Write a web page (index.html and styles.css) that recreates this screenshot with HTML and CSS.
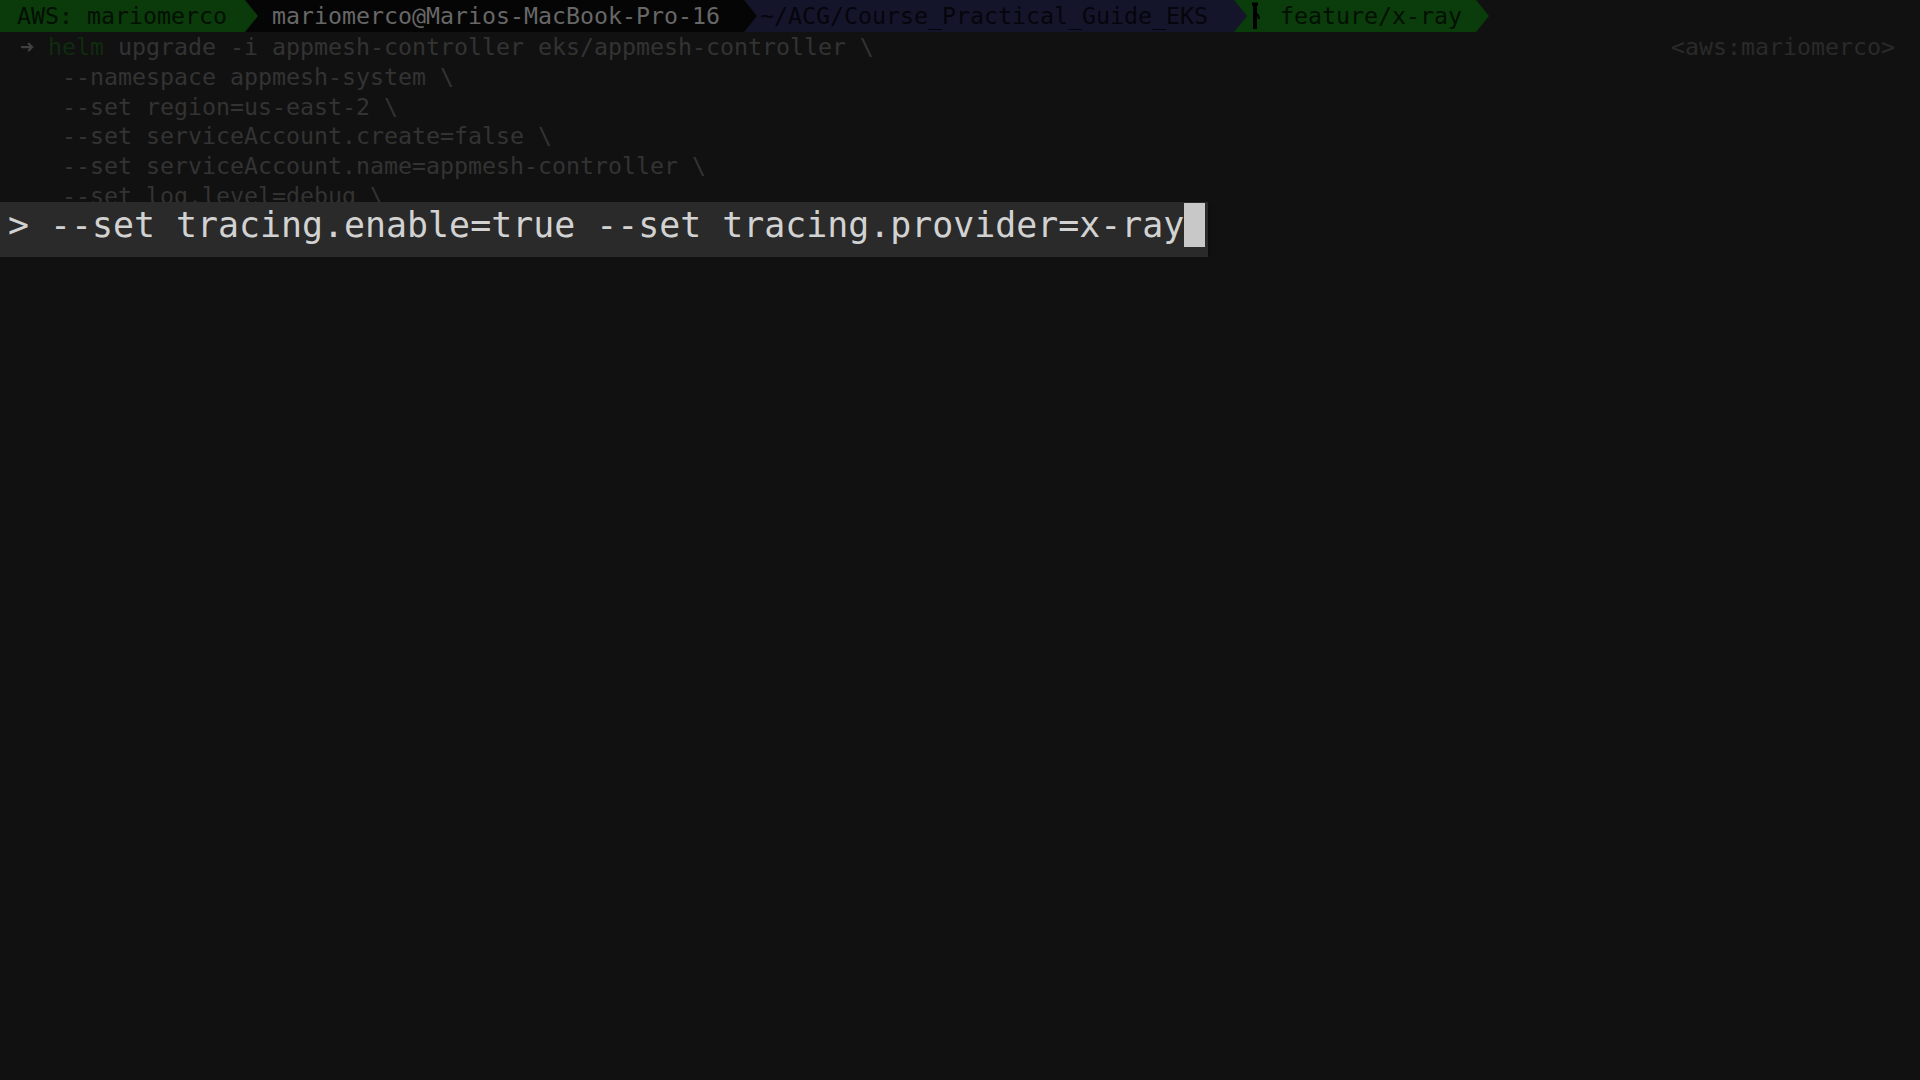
FILE: index.html
```html
<!DOCTYPE html>
<html lang="en">
<head>
	<meta charset="UTF-8">
	<title>terminal</title>
	<link rel="stylesheet" href="styles.css">
</head>
<body>
	<div class="prompt-bar">
		<div class="seg seg-aws"><span>AWS: mariomerco</span></div>
		<div class="seg seg-host"><span>mariomerco@Marios-MacBook-Pro-16</span></div>
		<div class="seg seg-dir"><span>~/ACG/Course_Practical_Guide_EKS</span></div>
		<div class="seg seg-git">
			<svg class="branch" width="12" height="30" viewBox="0 0 12 30">
				<path d="M6 3 V29" stroke="#000000" stroke-width="4"/>
				<path d="M3 4 H9" stroke="#000000" stroke-width="3"/>
				<path d="M6 13 Q10 15 10 19" stroke="#000000" stroke-width="2" fill="none"/>
			</svg>
			<span>feature/x-ray</span>
		</div>
	</div>

	<div class="term">
		<div class="line first">
			<span class="txt"> <span class="arrow">➜</span> <span class="cmd">helm</span> upgrade -i appmesh-controller eks/appmesh-controller \</span>
			<span class="rprompt">&lt;aws:mariomerco&gt;</span>
		</div>
		<div class="line"><span class="txt">    --namespace appmesh-system \</span></div>
		<div class="line"><span class="txt">    --set region=us-east-2 \</span></div>
		<div class="line"><span class="txt">    --set serviceAccount.create=false \</span></div>
		<div class="line"><span class="txt">    --set serviceAccount.name=appmesh-controller \</span></div>
		<div class="line"><span class="txt">    --set log.level=debug \</span></div>
	</div>

	<div class="zoom-line"><span class="zoom-text">&gt; --set tracing.enable=true --set tracing.provider=x-ray</span><span class="cursor"></span></div>
</body>
</html>
```

FILE: styles.css
```css
body{
	margin: 0;
	background-color: #111111;
	font-family: "DejaVu Sans Mono", "Liberation Mono", monospace;
	overflow: hidden;
}

/* powerline prompt */
.prompt-bar{
	display: flex;
	height: 32px;
	font-size: 23.25px;
	line-height: 32px;
	white-space: pre;
}
.seg{
	position: relative;
	display: flex;
	align-items: center;
	flex-shrink: 0;
	height: 32px;
	padding: 0 14px 0 18px;
}
.seg::after{
	content: "";
	position: absolute;
	right: -13px;
	top: 0;
	width: 13px;
	height: 32px;
	clip-path: polygon(0 0, 100% 50%, 0 100%);
	z-index: 2;
}
.seg-aws{
	background-color: #0b3a0b;
	color: #031003;
	padding-left: 17px;
	width: 214px;
}
.seg-aws::after{ background-color: #0b3a0b; }
.seg-host{
	background-color: #050505;
	color: #676767;
	padding-left: 27px;
	width: 458px;
}
.seg-host::after{ background-color: #050505; }
.seg-dir{
	background-color: #14152a;
	color: #05050c;
	padding-left: 16px;
	width: 460px;
}
.seg-dir::after{ background-color: #14152a; }
.seg-git{
	background-color: #0b3c0b;
	color: #021002;
	padding-left: 15px;
	width: 213px;
	gap: 19px;
}
.seg-git::after{ background-color: #0b3c0b; }
.branch{
	flex-shrink: 0;
	margin-top: -2px;
}

/* dimmed command lines */
.term{
	font-size: 23.25px;
	line-height: 29.8px;
	color: #333333;
	padding-left: 6px;
}
.line{
	height: 29.8px;
}
.txt{
	white-space: pre;
}
.line.first{
	display: flex;
	justify-content: space-between;
	padding-right: 25px;
}
.arrow{ color: #404040; }
.cmd{ color: #102c10; }
.rprompt{ color: #2a2a2a; }

/* zoomed current line */
.zoom-line{
	position: relative;
	z-index: 1;
	margin-top: -9px;
	width: 1200px;
	height: 54px;
	padding: 1px 0 0 8px;
	background-color: #2a2a2a;
	box-shadow: 0 4px 4px rgba(0, 0, 0, 0.45);
	font-size: 34.9px;
	line-height: 44px;
	color: #d2d2d2;
}
.zoom-text{
	white-space: pre;
	vertical-align: top;
}
.cursor{
	display: inline-block;
	width: 21px;
	height: 44px;
	vertical-align: top;
	background-color: #c8c8c8;
}
```
